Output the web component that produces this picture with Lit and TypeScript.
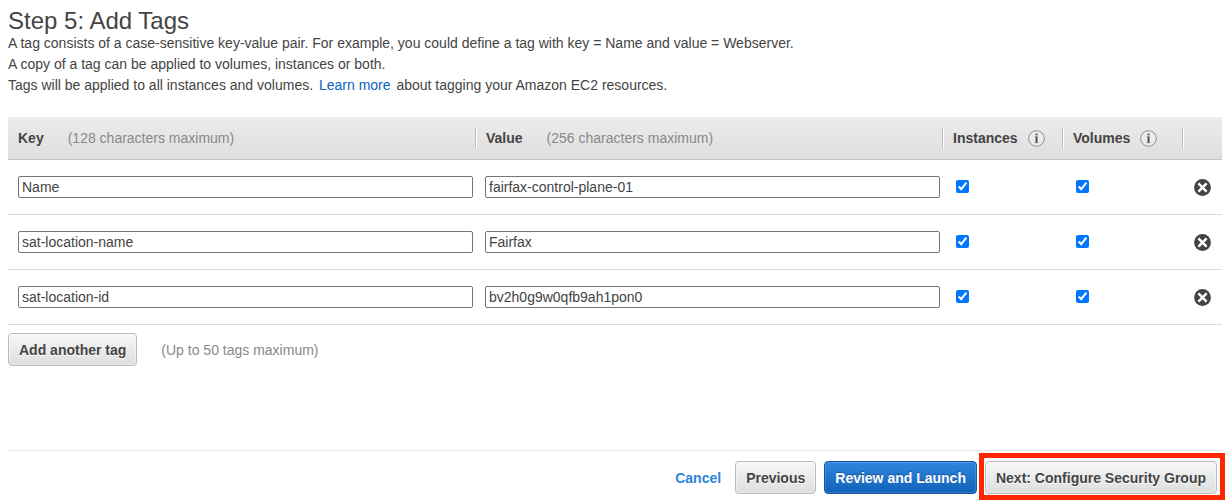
import { LitElement, html, css, svg } from "lit";
import { customElement, property, state } from "lit/decorators.js";

interface Tag {
  key: string;
  value: string;
  instances: boolean;
  volumes: boolean;
}

@customElement("info-button")
export class InfoButton extends LitElement {
  @property() topic = "";

  static styles = css`
    :host {
      display: inline-flex;
    }
    .info {
      display: flex;
      padding: 0;
      border: 0;
      background: none;
      cursor: pointer;
    }
  `;

  render() {
    return html`<button class="info" type="button" aria-label="About ${this.topic}">
      <svg width="17" height="17" viewBox="0 0 17 17" aria-hidden="true">
        <circle cx="8.5" cy="8.5" r="7.8" fill="#ececec" stroke="#8c8c8c" stroke-width="1" />
        <rect x="7.6" y="3.6" width="1.9" height="1.7" fill="#444" />
        <path d="M6.6 6.7H7.7M6.6 12.6H10.5" fill="none" stroke="#999" stroke-width="0.8" />
        <rect x="7.6" y="6.4" width="1.9" height="6.4" fill="#444" />
      </svg>
    </button>`;
  }
}

@customElement("app-root")
export class AppRoot extends LitElement {
  @state() private tags: Tag[] = [
    { key: "Name", value: "fairfax-control-plane-01", instances: true, volumes: true },
    { key: "sat-location-name", value: "Fairfax", instances: true, volumes: true },
    { key: "sat-location-id", value: "bv2h0g9w0qfb9ah1pon0", instances: true, volumes: true },
  ];

  static styles = css`
    :host {
      display: block;
      padding: 8px 6px 9px 8px;
      color: #444;
      background: #fff;
      font: 14px/21px "Liberation Sans", Arial, Helvetica, sans-serif;
    }
    * {
      box-sizing: border-box;
    }
    .title {
      margin: 0;
      font-size: 24px;
      line-height: 25px;
      font-weight: 400;
    }
    .intro {
      margin: 0 0 21px;
    }
    .intro-line {
      display: block;
    }
    .more {
      margin: 0 2px;
      color: #0a63bd;
      text-decoration: none;
    }
    .tags {
      width: 100%;
      table-layout: fixed;
      border-collapse: separate;
      border-spacing: 0;
    }
    .flag-col {
      width: 120px;
    }
    .remove-col {
      width: 40px;
    }
    .tags thead {
      background: linear-gradient(#ececec, #dedede);
    }
    .tags th {
      padding: 11px 0;
      border-bottom: 1px solid #c4c4c4;
      text-align: left;
    }
    .head {
      display: flex;
      align-items: center;
      height: 20px;
      padding-left: 10px;
    }
    .divided {
      border-left: 1px solid #bdbdbd;
      box-shadow: inset 1px 0 #fff;
    }
    .head info-button {
      margin-left: 10px;
    }
    .hint {
      margin-left: 24px;
      color: #888;
      font-weight: 400;
    }
    .tags td {
      padding: 16px 2px 16px 10px;
      border-bottom: 1px solid #dcdcdc;
      line-height: 0;
      vertical-align: middle;
    }
    .field {
      display: block;
      width: 100%;
      height: 22px;
      padding: 0 3px;
      border: 1px solid #767676;
      border-radius: 2px;
      color: #444;
      background: #fff;
      font: inherit;
      line-height: 20px;
    }
    .check {
      display: block;
      width: 13px;
      height: 13px;
      margin: 0 4px 2px;
      accent-color: #0075ff;
    }
    .remove {
      display: flex;
      margin-left: 2px;
      padding: 0;
      border: 0;
      background: none;
      cursor: pointer;
    }
    .add-row {
      display: flex;
      align-items: center;
      margin-top: 8px;
    }
    .add-row .hint {
      padding-top: 1px;
    }
    .button {
      height: 33px;
      padding: 1px 10px 0;
      border: 1px solid #bcbcbc;
      border-radius: 4px;
      color: #444;
      background: linear-gradient(#f7f7f7, #dedede);
      box-shadow: inset 0 0 0 1px rgba(255, 255, 255, 0.35);
      font: inherit;
      font-weight: 700;
      text-shadow: 0 1px #fff;
      white-space: nowrap;
      cursor: pointer;
    }
    .primary {
      border-color: #1157a5;
      color: #fff;
      background: linear-gradient(#2f86dd, #1261b8);
      box-shadow: inset 0 0 0 1px rgba(255, 255, 255, 0.15);
      text-shadow: 0 -1px rgba(0, 0, 0, 0.3);
    }
    .footer {
      display: flex;
      align-items: center;
      justify-content: flex-end;
      gap: 8px;
      margin-top: 84px;
      padding: 10px 5px 0 0;
      border-top: 1px solid #e8e8e8;
    }
    .cancel {
      margin-right: 6px;
      padding-top: 1px;
      color: #2e84dc;
      font-weight: 700;
      text-decoration: none;
    }
    .highlight {
      display: flex;
      position: relative;
    }
    .highlight::after {
      content: "";
      position: absolute;
      inset: -8px -8px -6px -6px;
      border: 5px solid #ff2600;
      pointer-events: none;
    }
  `;

  private edit(index: number, patch: Partial<Tag>) {
    this.tags = this.tags.map((tag, i) => (i === index ? { ...tag, ...patch } : tag));
  }

  private remove(index: number) {
    this.tags = this.tags.filter((_, i) => i !== index);
  }

  private add() {
    this.tags = [...this.tags, { key: "", value: "", instances: true, volumes: true }];
  }

  private cross() {
    return svg`<svg width="17" height="17" viewBox="0 0 17 17" aria-hidden="true">
      <circle cx="8.5" cy="8.5" r="8.4" fill="#444" />
      <path d="M4.4 4.4L12.6 12.6M12.6 4.4L4.4 12.6" stroke="#fff" stroke-width="2.5" />
    </svg>`;
  }

  private row(tag: Tag, i: number) {
    return html`<tr>
      <td>
        <input class="field" type="text" maxlength="128" aria-label="Key" .value=${tag.key}
          @input=${(e: Event) => this.edit(i, { key: (e.target as HTMLInputElement).value })} />
      </td>
      <td>
        <input class="field" type="text" maxlength="256" aria-label="Value" .value=${tag.value}
          @input=${(e: Event) => this.edit(i, { value: (e.target as HTMLInputElement).value })} />
      </td>
      <td>
        <input class="check" type="checkbox" aria-label="Instances" .checked=${tag.instances}
          @change=${(e: Event) => this.edit(i, { instances: (e.target as HTMLInputElement).checked })} />
      </td>
      <td>
        <input class="check" type="checkbox" aria-label="Volumes" .checked=${tag.volumes}
          @change=${(e: Event) => this.edit(i, { volumes: (e.target as HTMLInputElement).checked })} />
      </td>
      <td>
        <button class="remove" type="button" aria-label="Remove tag" @click=${() => this.remove(i)}>
          ${this.cross()}
        </button>
      </td>
    </tr>`;
  }

  render() {
    return html`
      <h1 class="title">Step 5: Add Tags</h1>
      <p class="intro">
        <span class="intro-line">A tag consists of a case-sensitive key-value pair. For example, you could define a tag with key = Name and value = Webserver.</span>
        <span class="intro-line">A copy of a tag can be applied to volumes, instances or both.</span>
        <span class="intro-line">Tags will be applied to all instances and volumes. <a class="more" href="#">Learn more</a> about tagging your Amazon EC2 resources.</span>
      </p>

      <table class="tags">
        <colgroup>
          <col />
          <col />
          <col class="flag-col" />
          <col class="flag-col" />
          <col class="remove-col" />
        </colgroup>
        <thead>
          <tr>
            <th scope="col"><div class="head">Key<span class="hint">(128 characters maximum)</span></div></th>
            <th scope="col"><div class="head divided">Value<span class="hint">(256 characters maximum)</span></div></th>
            <th scope="col"><div class="head divided">Instances<info-button topic="instances"></info-button></div></th>
            <th scope="col"><div class="head divided">Volumes<info-button topic="volumes"></info-button></div></th>
            <th scope="col"><div class="head divided"></div></th>
          </tr>
        </thead>
        <tbody>
          ${this.tags.map((tag, i) => this.row(tag, i))}
        </tbody>
      </table>

      <div class="add-row">
        <button class="button" type="button" @click=${this.add}>Add another tag</button>
        <span class="hint">(Up to 50 tags maximum)</span>
      </div>

      <footer class="footer">
        <a class="cancel" href="#">Cancel</a>
        <button class="button" type="button">Previous</button>
        <button class="button primary" type="button">Review and Launch</button>
        <span class="highlight">
          <button class="button" type="button">Next: Configure Security Group</button>
        </span>
      </footer>
    `;
  }
}
